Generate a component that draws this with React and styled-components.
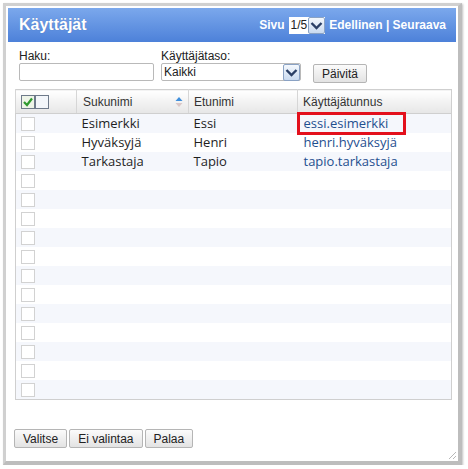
import React from "react";
import styled, { createGlobalStyle } from "styled-components";

const GlobalStyle = createGlobalStyle`
  body {
    margin: 0;
    background: #ffffff;
    font-family: "Liberation Sans", Arial, sans-serif;
  }
`;

const users = [
  { last: "Esimerkki", first: "Essi", login: "essi.esimerkki", marked: true },
  { last: "Hyväksyjä", first: "Henri", login: "henri.hyväksyjä" },
  { last: "Tarkastaja", first: "Tapio", login: "tapio.tarkastaja" },
];

const ROWS = 15;

const Chevron = () => (
  <svg width="13" height="9" viewBox="0 0 13 9">
    <path d="M1.5 2 L6.5 7 L11.5 2" fill="none" stroke="#2a3f66" strokeWidth="2.4" />
  </svg>
);

const CheckIcon = ({ checked }) => (
  <svg width="14" height="14" viewBox="0 0 14 14">
    <rect x="0.5" y="0.5" width="13" height="13" fill={checked ? "#eef4e8" : "#f3f6fa"} stroke="#6e7a8a" />
    {checked && <path d="M3 7 L6 10 L11 3.5" fill="none" stroke="#2f9a2f" strokeWidth="2.2" />}
  </svg>
);

const SortIcon = () => (
  <svg width="8" height="12" viewBox="0 0 8 12">
    <path d="M0.5 5 L4 1 L7.5 5 Z" fill="#3f8fdc" />
    <path d="M0.5 7 L4 11 L7.5 7 Z" fill="#d9c7c7" />
  </svg>
);

const App = () => {
  const rows = Array.from({ length: ROWS }, (_, i) => users[i] || null);
  return (
    <>
      <GlobalStyle />
      <Window>
        <TitleBar>
          <Title>Käyttäjät</Title>
          <Pager>
            <span>Sivu</span>
            <PageSelect>
              <PageValue>1/5</PageValue>
              <ArrowBox>
                <Chevron />
              </ArrowBox>
            </PageSelect>
            <span>Edellinen | Seuraava</span>
          </Pager>
        </TitleBar>

        <Filters>
          <Field>
            <Label>Haku:</Label>
            <TextInput />
          </Field>
          <Field>
            <Label>Käyttäjätaso:</Label>
            <Select>
              <SelectValue>Kaikki</SelectValue>
              <ArrowBox>
                <Chevron />
              </ArrowBox>
            </Select>
          </Field>
          <Button refresh>Päivitä</Button>
        </Filters>

        <Grid>
          <thead>
            <tr>
              <HeadCell width={61}>
                <HeadChecks>
                  <CheckIcon checked />
                  <CheckIcon />
                </HeadChecks>
              </HeadCell>
              <HeadCell width={112}>
                <HeadInner>
                  Sukunimi
                  <SortIcon />
                </HeadInner>
              </HeadCell>
              <HeadCell width={109}>Etunimi</HeadCell>
              <HeadCell>Käyttäjätunnus</HeadCell>
            </tr>
          </thead>
          <tbody>
            {rows.map((u, i) => (
              <Row key={i} tinted={i % 2 === 0}>
                <Cell>
                  <RowCheck />
                </Cell>
                <Cell>{u && u.last}</Cell>
                <Cell>{u && u.first}</Cell>
                <Cell>
                  {u && <Login marked={u.marked}>{u.login}</Login>}
                </Cell>
              </Row>
            ))}
          </tbody>
        </Grid>

        <Actions>
          <Button>Valitse</Button>
          <Button>Ei valintaa</Button>
          <Button>Palaa</Button>
        </Actions>
        <Grip>
          <svg width="10" height="10" viewBox="0 0 10 10">
            <path d="M9 2 L2 9 M9 6 L6 9" stroke="#b8b8b8" strokeWidth="1" />
          </svg>
        </Grip>
      </Window>
    </>
  );
};

export default App;

const Window = styled.div`
  position: relative;
  box-sizing: border-box;
  margin: 3px 0 0 3px;
  width: 459px;
  height: 462px;
  border: 3px solid #d0d0d0;
  border-right-width: 4px;
  border-bottom-width: 4px;
  border-right-color: #bdbdbd;
  border-bottom-color: #bdbdbd;
  box-shadow: 1px 1px 2px rgba(0, 0, 0, 0.25);
  background: #ffffff;
  padding: 2px 2px 0 2px;
`;

const TitleBar = styled.div`
  height: 34px;
  display: flex;
  align-items: center;
  justify-content: space-between;
  padding: 0 10px 0 11px;
  background: linear-gradient(#7ba8ec, #4d81d9);
  color: #ffffff;
`;

const Title = styled.h1`
  margin: 0;
  font-size: 16px;
  font-weight: bold;
  text-shadow: 0 0 1px rgba(0, 0, 0, 0.2);
`;

const Pager = styled.div`
  display: flex;
  align-items: center;
  gap: 4px;
  font-size: 12px;
  font-weight: bold;
`;

const PageSelect = styled.div`
  display: flex;
  align-items: center;
  height: 17px;
  background: #ffffff;
  padding-left: 2px;
`;

const PageValue = styled.span`
  color: #222222;
  font-weight: normal;
  font-size: 12px;
  padding-right: 1px;
`;

const ArrowBox = styled.div`
  box-sizing: border-box;
  width: 17px;
  height: 17px;
  display: flex;
  align-items: center;
  justify-content: center;
  border: 1px solid #8aa2c4;
  border-radius: 2px;
  background: linear-gradient(#f4f8fd, #c9daf0);
`;

const Filters = styled.div`
  display: flex;
  align-items: flex-end;
  gap: 7px;
  padding: 4px 0 0 11px;
  height: 39px;
  box-sizing: border-box;
`;

const Field = styled.div`
  display: flex;
  flex-direction: column;
`;

const Label = styled.label`
  font-size: 12px;
  color: #222222;
  line-height: 14px;
`;

const TextInput = styled.div`
  box-sizing: border-box;
  width: 135px;
  height: 18px;
  border: 1px solid #b9b9b9;
  border-radius: 2px;
`;

const Select = styled.div`
  box-sizing: border-box;
  width: 140px;
  height: 18px;
  display: flex;
  align-items: center;
  justify-content: space-between;
  border: 1px solid #b9b9b9;
  border-radius: 2px;
`;

const SelectValue = styled.span`
  font-size: 12px;
  color: #222222;
  padding-left: 2px;
`;

const Button = styled.button`
  box-sizing: border-box;
  height: 19px;
  padding: 0 8px;
  margin: ${(p) => (p.refresh ? "0 0 -2px 5px" : "0")};
  font-family: "Liberation Sans", Arial, sans-serif;
  font-size: 12px;
  color: #222222;
  border: 1px solid #b5b5b5;
  border-radius: 2px;
  background: linear-gradient(#fbfbfb, #e3e3e3);
`;

const Grid = styled.table`
  margin: 8px 0 0 7px;
  width: 437px;
  border-collapse: collapse;
  border: 1px solid #cfcfcf;
  table-layout: fixed;
`;

const HeadCell = styled.th`
  box-sizing: border-box;
  width: ${(p) => (p.width ? `${p.width}px` : "auto")};
  height: 24px;
  padding: 0 5px;
  text-align: left;
  font-weight: normal;
  font-size: 12px;
  color: #333333;
  background: linear-gradient(#ffffff, #e6e6e6);
  border-left: 1px solid #d6d6d6;
  border-bottom: 1px solid #cfcfcf;
`;

const HeadInner = styled.div`
  display: flex;
  align-items: center;
  justify-content: space-between;
  padding-left: 1px;
`;

const HeadChecks = styled.div`
  display: flex;
`;

const Row = styled.tr`
  height: 19px;
  background: ${(p) => (p.tinted ? "#f5f7fc" : "#ffffff")};
`;

const Cell = styled.td`
  height: 19px;
  padding: 0 5px;
  font-family: "Open Sans", "DejaVu Sans", sans-serif;
  font-size: 13px;
  color: #1e1e1e;
  white-space: nowrap;
  overflow: visible;
  line-height: 17px;
`;

const RowCheck = styled.div`
  box-sizing: border-box;
  width: 14px;
  height: 14px;
  border: 1px solid #d2d2d2;
  background: #ffffff;
`;

const Login = styled.span`
  display: inline-block;
  color: #1f4f8f;
  margin: -3px 0 -3px -6px;
  padding: 0 15px 0 4px;
  line-height: 17px;
  border: 3px solid ${(p) => (p.marked ? "#e3101c" : "transparent")};
`;

const Actions = styled.div`
  display: flex;
  gap: 2px;
  margin: 29px 0 0 6px;
`;

const Grip = styled.div`
  position: absolute;
  right: 1px;
  bottom: 1px;
  line-height: 0;
`;
